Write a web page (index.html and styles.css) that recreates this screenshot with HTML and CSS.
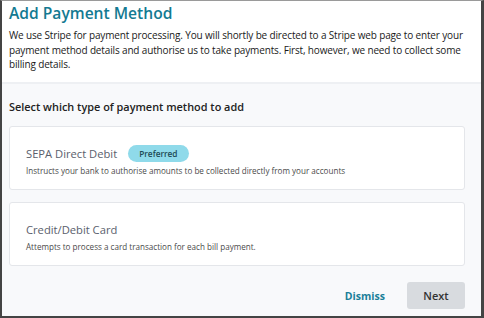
FILE: index.html
```html
<!doctype html>
<html lang="en">

<head>
  <meta charset="UTF-8" />
  <meta name="viewport" content="width=device-width, initial-scale=1" />
  <title>Add Payment Method</title>
  <link rel="stylesheet" href="styles.css">
</head>

<body>
  <div class="dialog">
    <div class="dialog-header">
      <h1>Add Payment Method</h1>
      <p class="intro">We use Stripe for payment processing. You will shortly be directed to a Stripe web page to enter your
        payment method details and authorise us to take payments. First, however, we need to collect some
        billing details.</p>
    </div>

    <div class="dialog-body">
      <h2>Select which type of payment method to add</h2>

      <div class="method-card">
        <div class="method-title">SEPA Direct Debit <span class="badge">Preferred</span></div>
        <div class="method-text">Instructs your bank to authorise amounts to be collected directly from your accounts</div>
      </div>

      <div class="method-card">
        <div class="method-title">Credit/Debit Card</div>
        <div class="method-text">Attempts to process a card transaction for each bill payment.</div>
      </div>

      <div class="actions">
        <button class="dismiss-button">Dismiss</button>
        <button class="next-button">Next</button>
      </div>
    </div>
  </div>
</body>

</html>
```

FILE: styles.css
```css
body {
  margin: 0;
  font-family: "Open Sans", "Noto Sans", sans-serif;
  background-color: white;
}

.dialog {
  box-sizing: border-box;
  width: 484px;
  height: 318px;
  border-top: 1px solid #9a9a9a;
  border-left: 2px solid #444;
  border-right: 3px solid #444;
  border-bottom: 2px solid #444;
  display: flex;
  flex-direction: column;
}

.dialog-header {
  background-color: white;
  padding: 1px 7px 0;
  height: 83px;
  box-sizing: border-box;
  border-bottom: 2px solid #eef0f3;
}

h1 {
  margin: 0;
  font-size: 15.6px;
  font-weight: 600;
  color: #137a92;
  line-height: 23px;
}

.intro {
  margin: 3px 0 0;
  font-size: 10px;
  letter-spacing: -0.15px;
  line-height: 14.5px;
  color: #1a1a1a;
}

.dialog-body {
  flex: 1;
  background-color: #f8f9fb;
  padding: 0 16px 0 7px;
}

h2 {
  margin: 15px 0 12px;
  font-size: 10.9px;
  font-weight: 600;
  color: #222;
}

.method-card {
  background-color: white;
  border: 1px solid #e4e6ea;
  border-radius: 3px;
  padding: 17px 16px 0;
  height: 64px;
  box-sizing: border-box;
  margin-bottom: 12px;
}

.method-title {
  font-size: 11.2px;
  color: #5a606c;
  display: flex;
  align-items: center;
  gap: 11px;
  height: 18px;
}

.badge {
  background-color: #8fdaea;
  color: #1d4a55;
  font-size: 8.3px;
  font-weight: 600;
  padding: 2px 11px;
  border-radius: 10px;
  line-height: 13px;
}

.method-text {
  margin-top: 3px;
  font-size: 8.1px;
  color: #4a4a4a;
}

.actions {
  display: flex;
  justify-content: flex-end;
  align-items: center;
  gap: 22px;
  margin-top: 16px;
}

.dismiss-button {
  background: none;
  border: none;
  font-family: inherit;
  font-size: 10.5px;
  font-weight: 700;
  color: #1a7f99;
  padding: 0;
  cursor: pointer;
}

.next-button {
  background-color: #d8dbdf;
  border: none;
  border-radius: 3px;
  width: 58px;
  height: 27px;
  font-family: inherit;
  font-size: 11px;
  font-weight: 600;
  color: #333;
  cursor: pointer;
}
```
